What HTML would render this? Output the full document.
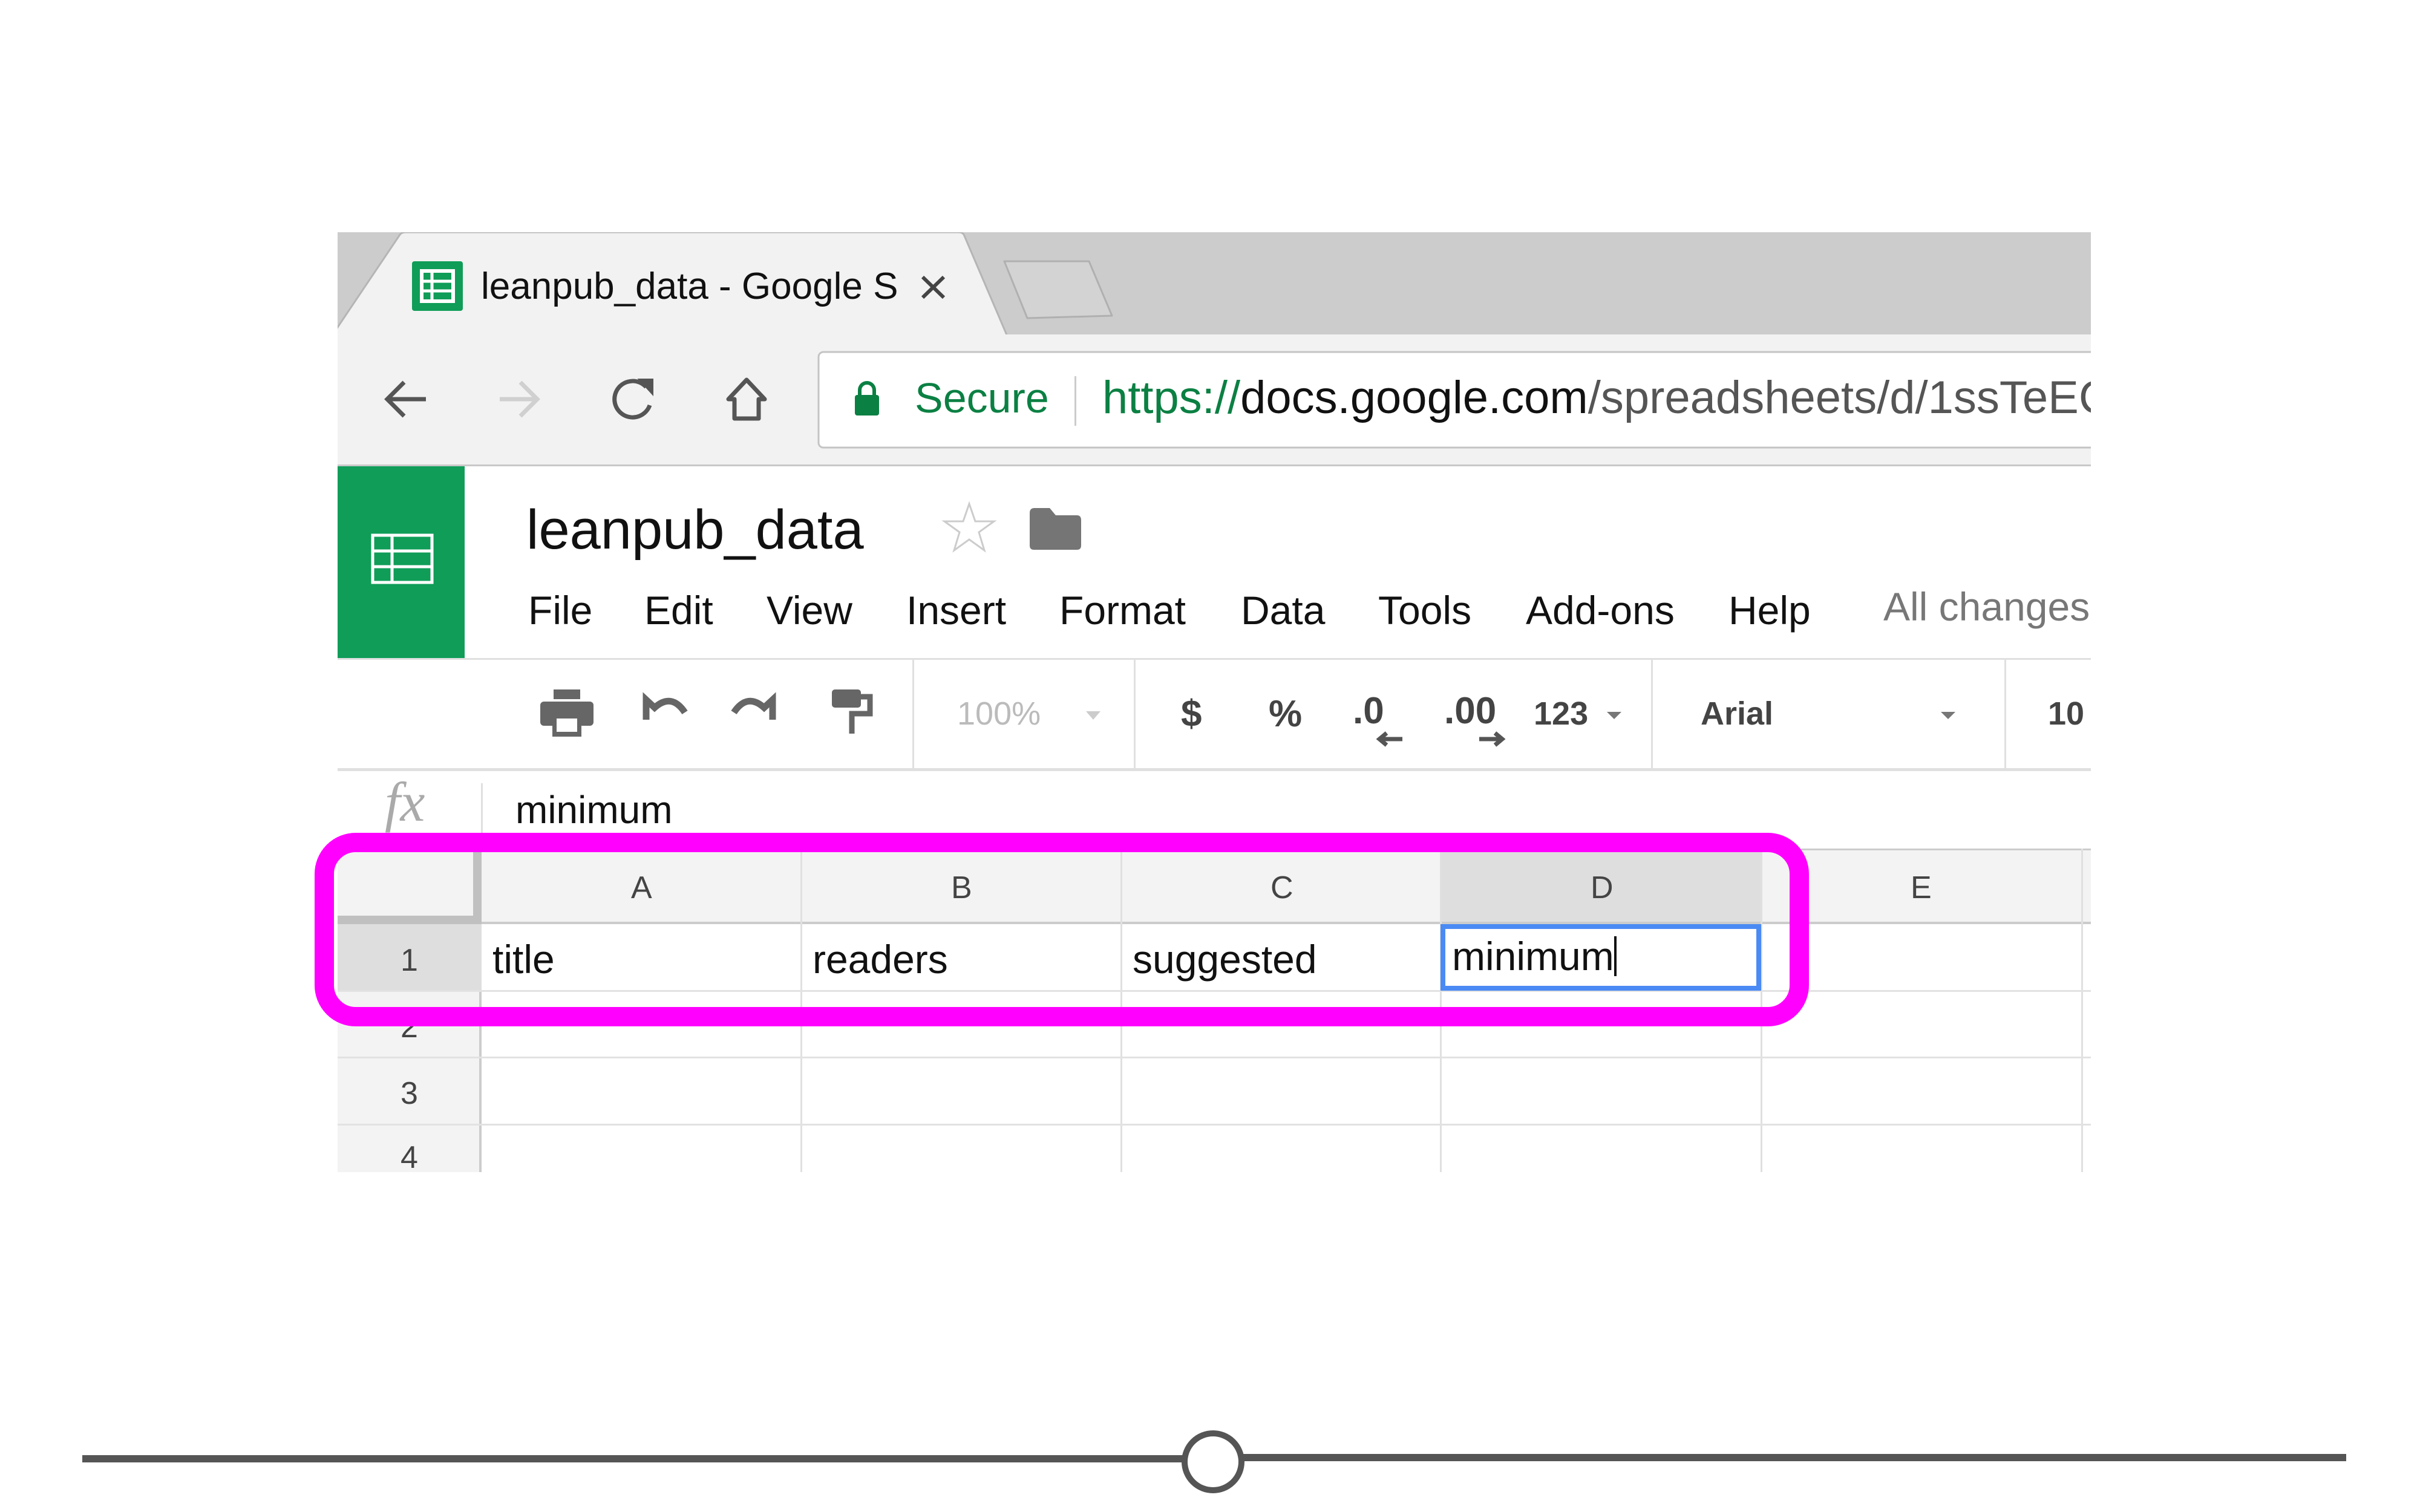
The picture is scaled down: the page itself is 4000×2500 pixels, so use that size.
<!DOCTYPE html>
<html><head><meta charset="utf-8"><style>
*{margin:0;padding:0;box-sizing:border-box}
body{width:4000px;height:2500px;background:#fff;position:relative;overflow:hidden;font-family:"Liberation Sans",sans-serif}
#shot{position:absolute;left:0;top:0;width:4000px;height:2500px;clip-path:inset(384px 544px 562px 558px)}
.a{position:absolute;white-space:nowrap}
.t{position:absolute;white-space:nowrap;line-height:1}
.vl{position:absolute;width:3px;background:#e0e0e0}
.hl{position:absolute;height:3px;background:#e2e2e2}
</style></head><body>
<div id="shot">
 <div class="a" style="left:558px;top:384px;width:2898px;height:172px;background:#cccccc"></div>
 <svg class="a" style="left:0;top:0" width="4000" height="800">
  <path d="M548 556 L661 388 Q664 384 670 384 L1585 384 Q1592 384 1594 390 L1665 556 Z" fill="#f2f2f2" stroke="#b5b5b5" stroke-width="3"/>
  <path d="M1660 432 L1800 432 L1838 522 L1698 526 Z" fill="#d3d3d3" stroke="#b0b0b0" stroke-width="3" stroke-linejoin="round"/>
  <rect x="681" y="432" width="84" height="82" rx="4" fill="#0f9d58"/>
  <rect x="697" y="448" width="52" height="50" fill="none" stroke="#fff" stroke-width="6"/>
  <path d="M697 465 H749 M697 481 H749 M714 448 V498" stroke="#fff" stroke-width="5"/>
  <path d="M1525 458 L1560 492 M1560 458 L1525 492" stroke="#444" stroke-width="6"/>
 </svg>
 <div class="t" style="left:795px;top:443px;font-size:62px;color:#111">leanpub_data - Google S</div>
 <div class="a" style="left:558px;top:553px;width:2898px;height:218px;background:#f2f2f2;border-bottom:3px solid #c8c8c8"></div>
 <svg class="a" style="left:0;top:0" width="4000" height="800">
  <path d="M704 660 H642 M668 632 L640 660 L668 688" fill="none" stroke="#555" stroke-width="7"/>
  <path d="M826 660 H888 M860 632 L888 660 L860 688" fill="none" stroke="#d0d0d0" stroke-width="7"/>
  <path d="M1068 640 A30 30 0 1 0 1074 670" fill="none" stroke="#555" stroke-width="7"/>
  <path d="M1058 628 L1078 628 L1078 650 Z" fill="#555" stroke="#555" stroke-width="4"/>
  <path d="M1234 628 L1204 660 L1214 660 L1214 692 L1254 692 L1254 660 L1264 660 Z" fill="none" stroke="#555" stroke-width="7" stroke-linejoin="round"/>
  <rect x="1353" y="582" width="2200" height="158" rx="8" fill="#fff" stroke="#c4c4c4" stroke-width="3"/>
  <rect x="1413" y="653" width="40" height="34" rx="4" fill="#0b8043"/>
  <path d="M1421 655 V645 A12 12 0 0 1 1445 645 V655" fill="none" stroke="#0b8043" stroke-width="6"/>
  <rect x="1776" y="622" width="3" height="82" fill="#ccc"/>
 </svg>
 <div class="t" style="left:1512px;top:623px;font-size:70px;color:#0b8043">Secure</div>
 <div class="t" style="left:1822px;top:620px;font-size:76px;color:#555"><span style="color:#0b8043">https://</span><span style="color:#111">docs.google.com</span>/spreadsheets/d/1ssTeEC</div>
 <div class="a" style="left:558px;top:771px;width:210px;height:317px;background:#0f9d58"></div>
 <svg class="a" style="left:0;top:0" width="4000" height="1100">
  <rect x="616" y="885" width="98" height="78" fill="none" stroke="#fff" stroke-width="5"/>
  <path d="M616 911 H714 M616 937 H714 M648 885 V963" stroke="#fff" stroke-width="5"/>
  <path d="M1602 833 L1612 862 L1643 862 L1618 880 L1627 910 L1602 892 L1577 910 L1586 880 L1561 862 L1592 862 Z" fill="none" stroke="#ccc" stroke-width="3"/>
  <path d="M1702 848 Q1702 840 1710 840 L1735 840 L1745 852 L1780 852 Q1787 852 1787 860 L1787 902 Q1787 909 1780 909 L1709 909 Q1702 909 1702 902 Z" fill="#757575"/>
 </svg>
 <div class="t" style="left:870px;top:830px;font-size:92px;color:#111">leanpub_data</div>
 <div class="t" style="top:976px;font-size:66px;color:#111;left:0">
  <span class="t" style="left:873px">File</span><span class="t" style="left:1065px">Edit</span><span class="t" style="left:1267px">View</span><span class="t" style="left:1498px">Insert</span><span class="t" style="left:1751px">Format</span><span class="t" style="left:2051px">Data</span><span class="t" style="left:2278px">Tools</span><span class="t" style="left:2522px">Add-ons</span><span class="t" style="left:2857px">Help</span><span class="t" style="left:3113px;color:#777;top:-6px">All changes saved</span>
 </div>
 <div class="a" style="left:558px;top:1088px;width:2898px;height:187px;border-top:3px solid #e0e0e0;border-bottom:5px solid #e0e0e0"></div>
 <div class="vl" style="left:1508px;top:1090px;height:183px"></div>
 <div class="vl" style="left:1874px;top:1090px;height:183px"></div>
 <div class="vl" style="left:2729px;top:1090px;height:183px"></div>
 <div class="vl" style="left:3313px;top:1090px;height:183px"></div>
 <svg class="a" style="left:0;top:0" width="4000" height="1300">
  <rect x="915" y="1140" width="44" height="16" fill="#666"/>
  <rect x="893" y="1160" width="88" height="40" rx="6" fill="#666"/>
  <rect x="913" y="1184" width="48" height="34" fill="#666"/>
  <rect x="920" y="1188" width="34" height="22" fill="#fff"/>
  <path d="M1068 1190 L1068 1157 L1082 1170 Q1110 1145 1132 1178" fill="none" stroke="#666" stroke-width="11"/>
  <path d="M1277 1190 L1277 1157 L1263 1170 Q1235 1145 1213 1178" fill="none" stroke="#666" stroke-width="11"/>
  <rect x="1375" y="1140" width="48" height="30" rx="5" fill="#666"/>
  <path d="M1423 1152 H1438 V1180 H1408 V1213" fill="none" stroke="#666" stroke-width="9"/>
  <path d="M1795 1176 L1819 1176 L1807 1190 Z" fill="#ccc"/>
  <path d="M2656 1177 L2680 1177 L2668 1189 Z" fill="#777"/>
  <path d="M3208 1177 L3232 1177 L3220 1189 Z" fill="#777"/>
  <path d="M2318 1222 H2280 M2292 1212 L2280 1222 L2292 1232" fill="none" stroke="#555" stroke-width="7"/>
  <path d="M2445 1222 H2483 M2471 1212 L2483 1222 L2471 1232" fill="none" stroke="#555" stroke-width="7"/>
 </svg>
 <div class="t" style="left:1582px;top:1153px;font-size:54px;color:#bbb">100%</div>
 <div class="t" style="left:1952px;top:1150px;font-size:62px;color:#444;font-weight:bold">$</div>
 <div class="t" style="left:2097px;top:1150px;font-size:62px;color:#444;font-weight:bold">%</div>
 <div class="t" style="left:2236px;top:1145px;font-size:62px;color:#444;font-weight:bold">.0</div>
 <div class="t" style="left:2387px;top:1145px;font-size:62px;color:#444;font-weight:bold">.00</div>
 <div class="t" style="left:2535px;top:1153px;font-size:54px;color:#444;font-weight:bold">123</div>
 <div class="t" style="left:2811px;top:1153px;font-size:54px;color:#444;font-weight:bold">Arial</div>
 <div class="t" style="left:3385px;top:1153px;font-size:54px;color:#444;font-weight:bold">10</div>
 <div class="t" style="left:636px;top:1280px;font-size:92px;color:#aaa;font-family:'Liberation Serif',serif;font-style:italic">fx</div>
 <div class="vl" style="left:795px;top:1295px;height:90px"></div>
 <div class="t" style="left:852px;top:1307px;font-size:64px;color:#111">minimum</div>
 <div class="a" style="left:558px;top:1403px;width:2898px;height:125px;background:#f3f3f3;border-top:3px solid #ccc;border-bottom:4px solid #ccc"></div>
 <div class="a" style="left:558px;top:1403px;width:238px;height:535px;background:#f3f3f3;border-right:4px solid #ccc"></div>
 <div class="a" style="left:558px;top:1403px;width:238px;height:125px;background:#f3f3f3;border-right:14px solid #c0c0c0;border-bottom:14px solid #c0c0c0"></div>
 <div class="a" style="left:2381px;top:1403px;width:530px;height:125px;background:#dedede;border-bottom:4px solid #ccc"></div>
 <div class="a" style="left:558px;top:1528px;width:238px;height:110px;background:#dedede"></div>
 <div class="vl" style="left:1323px;top:1403px;height:535px"></div>
 <div class="vl" style="left:1852px;top:1403px;height:535px"></div>
 <div class="vl" style="left:2380px;top:1403px;height:535px"></div>
 <div class="vl" style="left:2910px;top:1403px;height:535px"></div>
 <div class="vl" style="left:3440px;top:1403px;height:535px"></div>
 <div class="hl" style="left:558px;top:1637px;width:2898px"></div>
 <div class="hl" style="left:558px;top:1747px;width:2898px"></div>
 <div class="hl" style="left:558px;top:1858px;width:2898px"></div>
 <div class="t" style="top:1442px;font-size:52px;color:#444;left:0">
  <span class="t" style="left:1043px">A</span><span class="t" style="left:1572px">B</span><span class="t" style="left:2100px">C</span><span class="t" style="left:2629px">D</span><span class="t" style="left:3158px">E</span>
 </div>
 <div class="t" style="left:662px;top:1562px;font-size:52px;color:#444">1</div>
 <div class="t" style="left:662px;top:1672px;font-size:52px;color:#444">2</div>
 <div class="t" style="left:662px;top:1782px;font-size:52px;color:#444">3</div>
 <div class="t" style="left:662px;top:1888px;font-size:52px;color:#444">4</div>
 <div class="t" style="left:814px;top:1553px;font-size:66px;color:#111">title</div>
 <div class="t" style="left:1343px;top:1553px;font-size:66px;color:#111">readers</div>
 <div class="t" style="left:1872px;top:1553px;font-size:66px;color:#111">suggested</div>
 <div class="a" style="left:2381px;top:1528px;width:530px;height:110px;border:8px solid #4a8af4;background:#fff"></div>
 <div class="t" style="left:2400px;top:1548px;font-size:66px;color:#111">minimum<span style="display:inline-block;width:4px;height:66px;background:#111;vertical-align:-10px"></span></div>
</div>
<div class="a" style="left:520px;top:1377px;width:2470px;height:320px;border:32px solid #ff00ff;border-radius:68px"></div>
<svg class="a" style="left:0;top:0" width="4000" height="2500">
 <line x1="136" y1="2412" x2="1957" y2="2412" stroke="#555" stroke-width="12"/>
 <line x1="2053" y1="2410" x2="3878" y2="2410" stroke="#555" stroke-width="12"/>
 <circle cx="2005" cy="2417" r="47" fill="#fff" stroke="#555" stroke-width="10"/>
</svg>
</body></html>
